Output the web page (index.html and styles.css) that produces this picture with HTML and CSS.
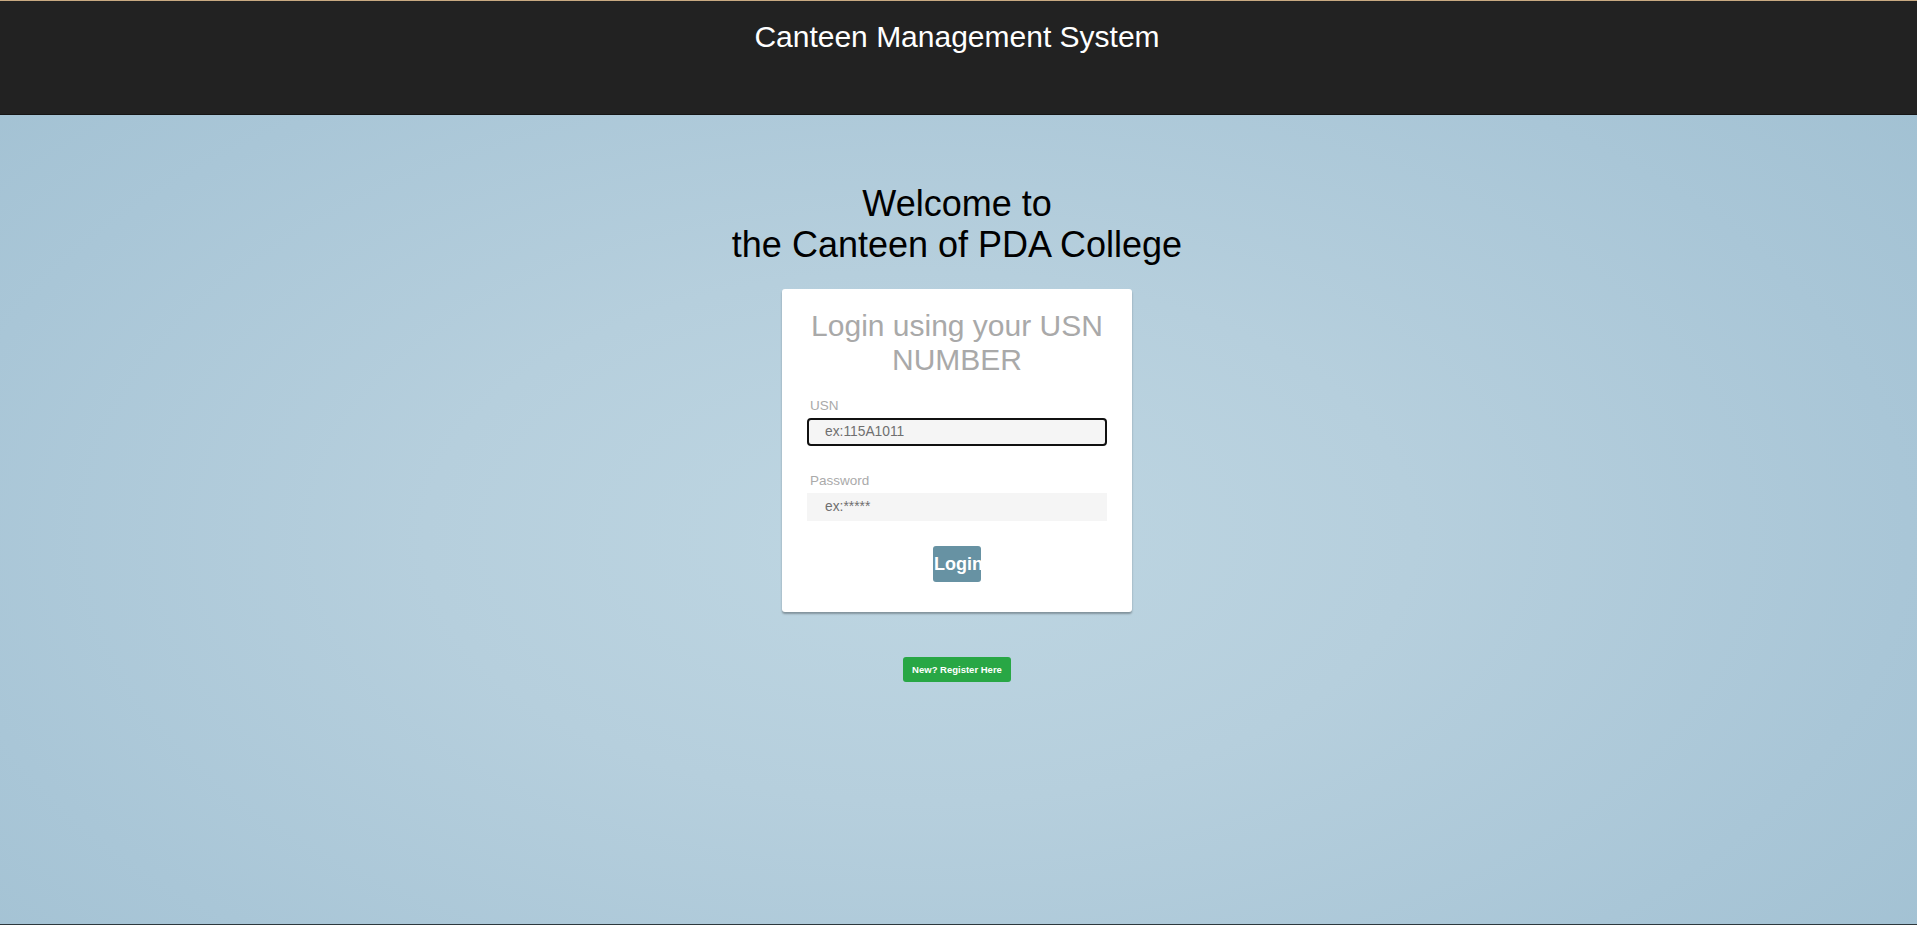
FILE: index.html
```html
<!DOCTYPE html>
<html lang="en">
<head>
<meta charset="utf-8">
<title>Canteen Management System</title>
<link rel="stylesheet" href="styles.css">
</head>
<body>
<div class="page">
  <header class="topbar">
    <h1 class="brand">Canteen Management System</h1>
  </header>
  <main class="content">
    <h2 class="welcome">Welcome to<br>the Canteen of PDA College</h2>
    <form class="card">
      <h3 class="card-title">Login using your USN NUMBER</h3>
      <div class="field field-first">
        <label class="field-label" for="usn">USN</label>
        <input class="field-input is-focused" id="usn" type="text" placeholder="ex:115A1011">
      </div>
      <div class="field">
        <label class="field-label" for="pw">Password</label>
        <input class="field-input" id="pw" type="password" placeholder="ex:*****">
      </div>
      <button class="login-btn" type="button"><span class="login-text">Login</span></button>
    </form>
    <a class="register-btn" href="#">New? Register Here</a>
  </main>
</div>
</body>
</html>
```
FILE: styles.css
```css
* { box-sizing: border-box; }
html, body { margin: 0; padding: 0; height: 100%; }
body {
  font-family: "Liberation Sans", Arial, sans-serif;
  background: radial-gradient(ellipse farthest-corner at 48% 58%, #bed6e2 0%, #b6cfdd 35%, #a9c6d7 70%, #9fbfd1 100%);
  border-top: 1px solid #c9aa82;
  border-bottom: 1px solid #2d383d;
  overflow: hidden;
}
.page {
  height: 100%;
  display: flex;
  flex-direction: column;
}
.topbar {
  background: #222222;
  height: 114px;
  padding: 19px 3px 0 0;
  text-align: center;
  border-bottom: 1px solid #151515;
  flex: none;
}
.brand {
  margin: 0;
  font-size: 30px;
  font-weight: normal;
  line-height: 34.5px;
  color: #ffffff;
}
.content {
  display: flex;
  flex-direction: column;
  align-items: center;
  padding-right: 3px;
}
.welcome {
  margin: 68px 0 0;
  font-size: 36px;
  font-weight: normal;
  line-height: 41.4px;
  color: #000000;
  text-align: center;
}
.card {
  margin-top: 23px;
  width: 350px;
  background: #ffffff;
  border-radius: 3px;
  box-shadow: 0 2px 2px rgba(0, 0, 0, 0.3);
  padding: 20px 25px 30px;
  display: flex;
  flex-direction: column;
  align-items: center;
}
.card-title {
  margin: 0 0 20px;
  font-size: 30px;
  font-weight: normal;
  line-height: 34.5px;
  color: #a9a9a9;
  text-align: center;
}
.field {
  width: 300px;
  display: flex;
  flex-direction: column;
}
.field-first { margin-bottom: 27px; }
.field-label {
  font-size: 13.5px;
  line-height: 15px;
  color: #aaaaaa;
  padding-left: 3px;
  margin-bottom: 5px;
}
.field-input {
  width: 300px;
  height: 28px;
  border: none;
  background: #f5f5f5;
  padding: 0 0 0 18px;
  margin: 0;
  font-family: "Liberation Sans", Arial, sans-serif;
  font-size: 13.8px;
  color: #555;
  outline: none;
}
.field-input::placeholder { color: #6f6f6f; }
.field-input.is-focused {
  border: 2px solid #111111;
  border-radius: 4px;
  padding-left: 16px;
}
.login-btn {
  margin-top: 25px;
  width: 48px;
  height: 36px;
  padding: 0 0 0 1px;
  border: none;
  border-radius: 3px;
  background: #6792a3;
  color: #ffffff;
  font-family: "Liberation Sans", Arial, sans-serif;
  font-size: 18px;
  font-weight: bold;
  white-space: nowrap;
  display: flex;
  align-items: center;
  justify-content: flex-start;
  overflow: visible;
}
.login-text {
  display: block;
  padding-top: 2px;
}
.register-btn {
  margin-top: 45px;
  width: 108px;
  height: 25px;
  display: flex;
  align-items: center;
  justify-content: center;
  background: #28a745;
  border-radius: 3px;
  color: #ffffff;
  font-size: 9.5px;
  font-weight: bold;
  text-decoration: none;
  white-space: nowrap;
}
```
